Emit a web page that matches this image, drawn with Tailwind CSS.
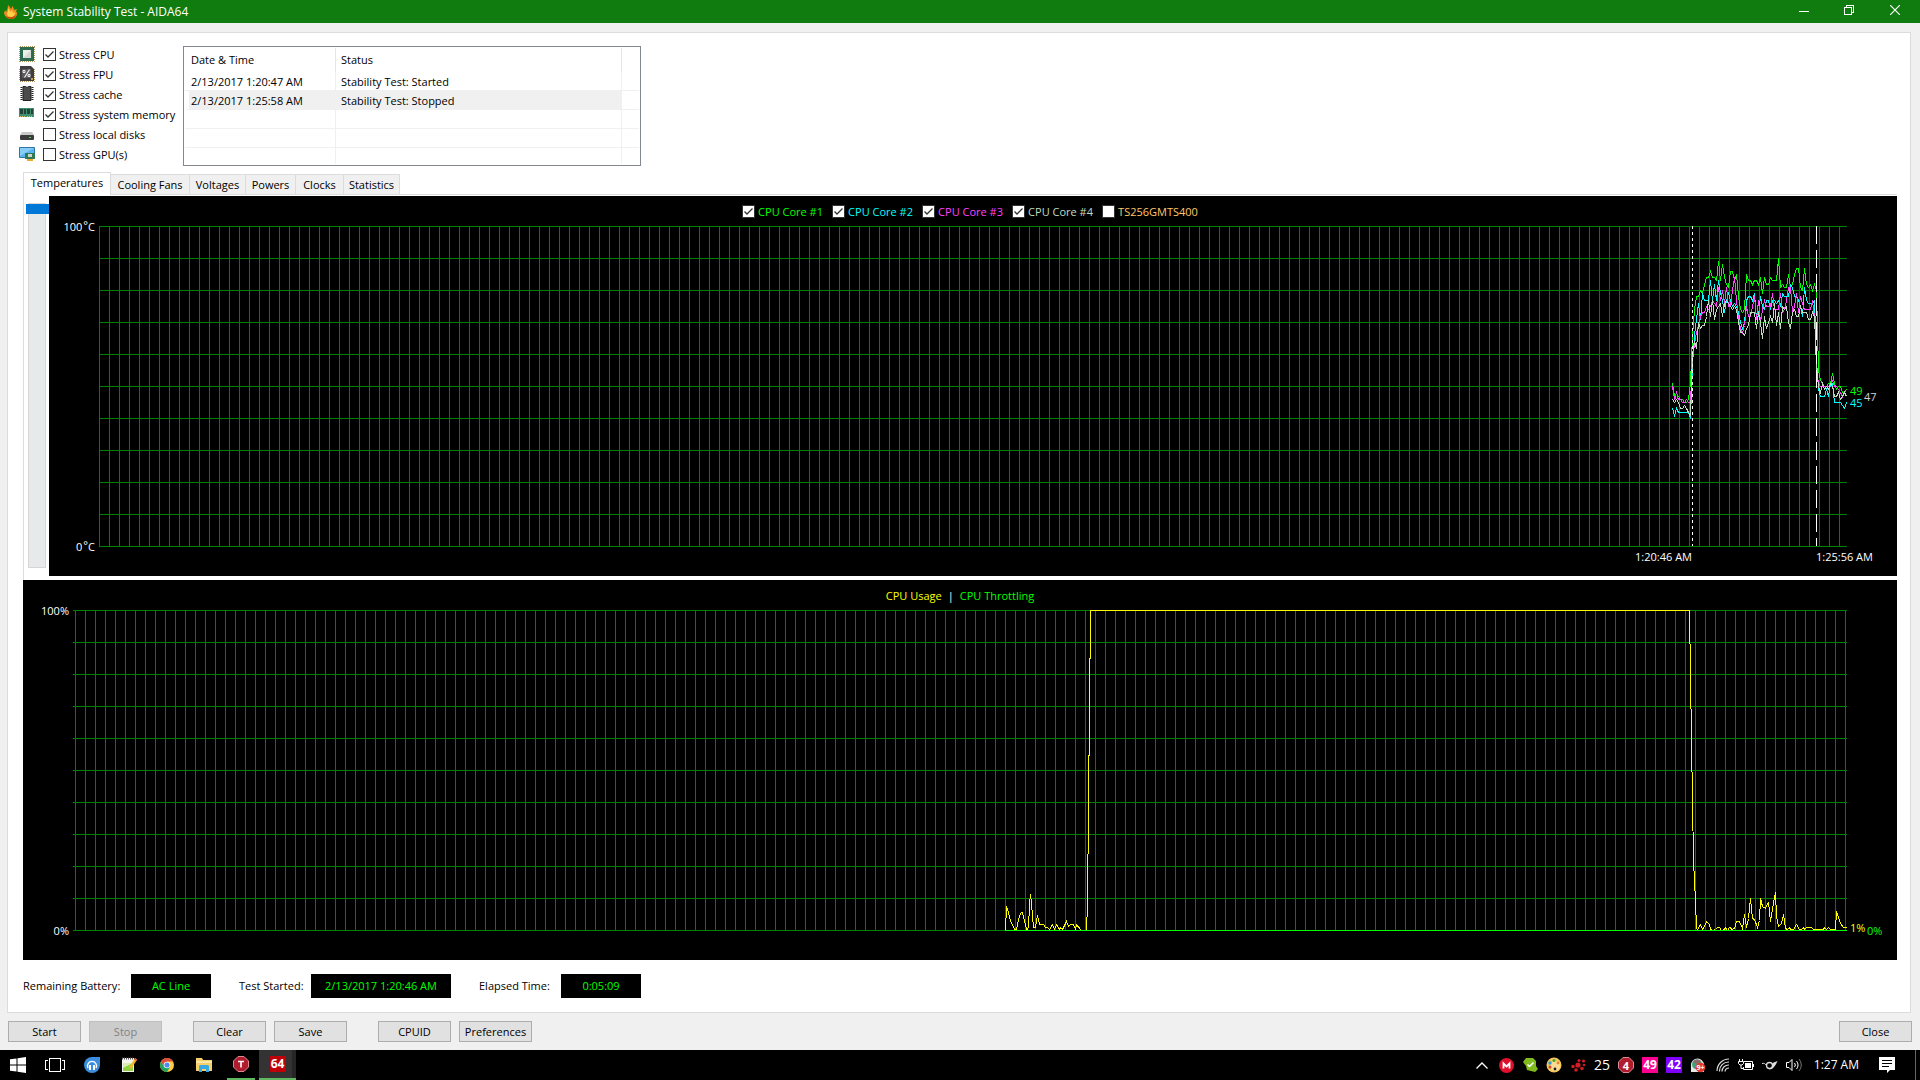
<!DOCTYPE html>
<html lang="en">
<head>
  <meta charset="UTF-8" />
  <meta name="viewport" content="width=device-width, initial-scale=1.0"/>
  <title>System Stability Test - AIDA64</title>
  <script src="https://cdn.jsdelivr.net/npm/@tailwindcss/browser@4"></script>
</head>
<body class="h-screen flex flex-col overflow-hidden bg-[#f0f0f0] text-black text-[11px] leading-4 font-['Open_Sans','Noto_Sans',sans-serif]">

  <!-- Title bar -->
  <header class="h-[23px] shrink-0 flex items-center bg-[#107c10] text-white pl-1 pr-0.5">
    <svg class="size-[14px] mr-[5px]" viewBox="0 0 14 14">
      <path d="M4 0c1 1 2 2 3 4 1-1 1-2 1-3 1 1 2 2 2 4l3-1-1 2 1 2c0 4-3 6-6 6S1 12 0 8l1-3 1 2c1-2 2-4 2-7z" fill="#f58a1f"/>
      <path d="M4 3c1 1 2 3 2 4l2-2 1 3 2-1c0 3-2 5-4 5S3 11 3 8l1-1z" fill="#ffd24a"/>
      <path d="M2 11c3 2 7 2 10-1-1 3-3 4-5 4s-4-1-5-3z" fill="#c2410c"/>
    </svg>
    <h1 class="flex-1 text-[12px]">System Stability Test - AIDA64</h1>
    <button class="w-[45px] h-full grid place-items-center pb-0.5" aria-label="Minimize">
      <svg width="10" height="10" viewBox="0 0 10 10" shape-rendering="crispEdges"><path d="M0 5.5h10" stroke="#fff"/></svg>
    </button>
    <button class="w-[46px] h-full grid place-items-center pb-1" aria-label="Restore">
      <svg width="10" height="10" viewBox="0 0 10 10" fill="none" stroke="#fff" shape-rendering="crispEdges"><path d="M.5 2.5h7v7h-7zM2.500 2V.5h7v7H8"/></svg>
    </button>
    <button class="w-[46px] h-full grid place-items-center pb-1" aria-label="Close window">
      <svg width="10" height="10" viewBox="0 0 10 10" stroke="#fff" stroke-width="1.2"><path d="M0 0l10 10M10 0L0 10"/></svg>
    </button>
  </header>

  <main class="flex-1 min-h-0 flex flex-col mt-[9px] ml-[7px] mr-[9px] bg-white border border-[#dcdcdc]">

    <!-- Stress options + event log -->
    <section class="flex pt-3 shrink-0">
      <ul class="w-[175px] shrink-0 pl-[11px]">
        <li class="h-5 flex items-center whitespace-nowrap">
          <svg class="size-4 mr-2 mb-0.5" viewBox="0 0 16 16"><path d="M1 .5h15M1 15.500h15M.5 1v15M15.500 1v15" stroke="#b5975a" stroke-dasharray="1 1"/><path d="M1 1h14v14H1z" fill="#2c6b4f"/><path d="M4 4h8v8H4z" fill="#d5d9d3"/><path d="M4 4h8l-8 8z" fill="#eceeea"/></svg>
          <label class="flex items-center gap-[3px] pb-px">
            <span class="grid size-[13px]"><input type="checkbox" checked class="peer col-start-1 row-start-1 size-[13px] appearance-none bg-white border border-[#333]"/><svg class="col-start-1 row-start-1 hidden peer-checked:block pointer-events-none" viewBox="0 0 13 13" fill="none" stroke="#333" stroke-width="1.3"><path d="M2.500 6.500l2.500 2.500 5.500-5.500"/></svg></span>
            Stress CPU
          </label>
        </li>
        <li class="h-5 flex items-center whitespace-nowrap">
          <svg class="size-4 mr-2 mb-0.5" viewBox="0 0 16 16"><path d="M1 15.500h15M15.500 3v12M.5 3v12" stroke="#b5975a" stroke-dasharray="1 1"/><path d="M1 0h11l3 3v12H1z" fill="#3f3d3f"/><path d="M3 3h9v9H3z" fill="#5c5a5c"/><path d="M10.500 3.500l-5 8" stroke="#eee" stroke-width="1.200"/><path d="M4 4.500h2v2H4zM9 8.500h2v2H9z" fill="none" stroke="#eee"/><path d="M12 12h2v2h-2z" fill="#c9a050"/></svg>
          <label class="flex items-center gap-[3px] pb-px">
            <span class="grid size-[13px]"><input type="checkbox" checked class="peer col-start-1 row-start-1 size-[13px] appearance-none bg-white border border-[#333]"/><svg class="col-start-1 row-start-1 hidden peer-checked:block pointer-events-none" viewBox="0 0 13 13" fill="none" stroke="#333" stroke-width="1.3"><path d="M2.500 6.500l2.500 2.500 5.500-5.500"/></svg></span>
            Stress FPU
          </label>
        </li>
        <li class="h-5 flex items-center whitespace-nowrap">
          <svg class="size-4 mr-2 mb-0.5" viewBox="0 0 16 16"><path d="M2.500 1v14M13.500 1v14" stroke="#222" stroke-width="2" stroke-dasharray="1 1"/><path d="M4 .5h2.500l1.500 1 1.500-1H12v14H4z" fill="#4b4b4b" stroke="#222"/></svg>
          <label class="flex items-center gap-[3px] pb-px">
            <span class="grid size-[13px]"><input type="checkbox" checked class="peer col-start-1 row-start-1 size-[13px] appearance-none bg-white border border-[#333]"/><svg class="col-start-1 row-start-1 hidden peer-checked:block pointer-events-none" viewBox="0 0 13 13" fill="none" stroke="#333" stroke-width="1.3"><path d="M2.500 6.500l2.500 2.500 5.500-5.500"/></svg></span>
            Stress cache
          </label>
        </li>
        <li class="h-5 flex items-center whitespace-nowrap">
          <svg class="size-4 mr-2 mb-0.5" viewBox="0 0 16 16"><path d="M0 2h15v9H0z" fill="#3f8f6c"/><path d="M1 3h3v5H1zM5 3h2v5H5zM8 3h3v5H8zM12 3h2v5h-2z" fill="#23423a"/><path d="M1 10.500h6M8 10.500h6" stroke="#d8b967" stroke-dasharray="1 1"/></svg>
          <label class="flex items-center gap-[3px] pb-px">
            <span class="grid size-[13px]"><input type="checkbox" checked class="peer col-start-1 row-start-1 size-[13px] appearance-none bg-white border border-[#333]"/><svg class="col-start-1 row-start-1 hidden peer-checked:block pointer-events-none" viewBox="0 0 13 13" fill="none" stroke="#333" stroke-width="1.3"><path d="M2.500 6.500l2.500 2.500 5.500-5.500"/></svg></span>
            Stress system memory
          </label>
        </li>
        <li class="h-5 flex items-center whitespace-nowrap">
          <svg class="size-4 mr-2 mb-0.5" viewBox="0 0 16 16"><path d="M3 6h10l2 3H1z" fill="#c9c9c9"/><rect x="1" y="9" width="14" height="5" rx="1" fill="#3c3c3c"/><path d="M10 11h2v1h-2z" fill="#4fd84f"/></svg>
          <label class="flex items-center gap-[3px] pb-px">
            <span class="grid size-[13px]"><input type="checkbox" class="peer col-start-1 row-start-1 size-[13px] appearance-none bg-white border border-[#333]"/><svg class="col-start-1 row-start-1 hidden peer-checked:block pointer-events-none" viewBox="0 0 13 13" fill="none" stroke="#333" stroke-width="1.3"><path d="M2.500 6.500l2.500 2.500 5.500-5.500"/></svg></span>
            Stress local disks
          </label>
        </li>
        <li class="h-5 flex items-center whitespace-nowrap">
          <svg class="size-4 mr-2 mb-0.5" viewBox="0 0 16 16"><path d="M.5 1.500h15v10H.5z" fill="#58b4ee" stroke="#2d74a8"/><path d="M1 2h14L1 10z" fill="#86cdf7"/><path d="M6 7h10v6H6z" fill="#2f7a55"/><path d="M9 8h4v3H9z" fill="#c9d6cd"/><path d="M8 13h6v2H8z" fill="#f0a92b"/></svg>
          <label class="flex items-center gap-[3px] pb-px">
            <span class="grid size-[13px]"><input type="checkbox" class="peer col-start-1 row-start-1 size-[13px] appearance-none bg-white border border-[#333]"/><svg class="col-start-1 row-start-1 hidden peer-checked:block pointer-events-none" viewBox="0 0 13 13" fill="none" stroke="#333" stroke-width="1.3"><path d="M2.500 6.500l2.500 2.500 5.500-5.500"/></svg></span>
            Stress GPU(s)
          </label>
        </li>
      </ul>

      <div class="w-[458px] mt-px border border-[#828790] p-px">
        <table class="w-full table-fixed border-separate border-spacing-0 text-left">
          <colgroup><col class="w-[151px]"/><col class="w-[286px]"/><col/></colgroup>
          <thead>
            <tr class="h-6">
              <th class="p-0 pl-[6px] font-normal border-r border-[#e5e5e5]">Date &amp; Time</th>
              <th class="p-0 pl-[5px] font-normal border-r border-[#e5e5e5]">Status</th>
              <th class="p-0"></th>
            </tr>
          </thead>
          <tbody>
            <tr class="h-[19px]">
              <td class="p-0 pt-0.5 pl-[6px] border-r border-b border-[#f0f0f0]">2/13/2017 1:20:47 AM</td>
              <td class="p-0 pt-0.5 pl-[5px] border-r border-b border-[#f0f0f0]">Stability Test: Started</td>
              <td class="p-0 border-b border-[#f0f0f0]"></td>
            </tr>
            <tr class="h-[19px]">
              <td class="p-0 pt-0.5 pl-[2px] bg-[#f0f0f0] border-l-4 border-l-white border-b border-b-[#f0f0f0]">2/13/2017 1:25:58 AM</td>
              <td class="p-0 pt-0.5 pl-[5px] bg-[#f0f0f0] border-b border-[#f0f0f0]">Stability Test: Stopped</td>
              <td class="p-0 border-b border-[#f0f0f0]"></td>
            </tr>
            <tr class="h-[19px]">
              <td class="p-0 border-r border-b border-[#f0f0f0]"></td><td class="p-0 border-r border-b border-[#f0f0f0]"></td><td class="p-0 border-b border-[#f0f0f0]"></td>
            </tr>
            <tr class="h-[19px]">
              <td class="p-0 border-r border-b border-[#f0f0f0]"></td><td class="p-0 border-r border-b border-[#f0f0f0]"></td><td class="p-0 border-b border-[#f0f0f0]"></td>
            </tr>
            <tr class="h-4">
              <td class="p-0 border-r border-[#f0f0f0]"></td><td class="p-0 border-r border-[#f0f0f0]"></td><td class="p-0"></td>
            </tr>
          </tbody>
        </table>
      </div>
    </section>

    <!-- Tabs -->
    <nav class="h-[22px] mt-[6px] ml-[15px] shrink-0 flex items-end" role="tablist">
      <button role="tab" aria-selected="true" class="relative z-10 w-[88px] h-[23px] -mb-px pb-0.5 bg-white border border-b-0 border-[#dcdcdc]">Temperatures</button>
      <button role="tab" class="w-[79px] h-5 bg-[#f0f0f0] border-t border-r border-[#dcdcdc] whitespace-nowrap">Cooling Fans</button>
      <button role="tab" class="w-[56px] h-5 bg-[#f0f0f0] border-t border-r border-[#dcdcdc]">Voltages</button>
      <button role="tab" class="w-[50px] h-5 bg-[#f0f0f0] border-t border-r border-[#dcdcdc]">Powers</button>
      <button role="tab" class="w-[48px] h-5 bg-[#f0f0f0] border-t border-r border-[#dcdcdc]">Clocks</button>
      <button role="tab" class="w-[56px] h-5 bg-[#f0f0f0] border-t border-r border-[#dcdcdc]">Statistics</button>
    </nav>

    <!-- Temperature graph -->
    <section class="grow basis-[386px] min-h-0 flex ml-[15px] mr-[13px] pt-px pb-1 border-t border-l border-[#dcdcdc]">
      <div class="w-[25px] shrink-0 flex pl-px pt-[7px] pb-2">
        <input id="zoomSlider" type="range" min="0" max="10" value="0" aria-label="Graph scale"
               class="w-[23px] h-full appearance-none bg-transparent [writing-mode:vertical-lr]
                      [&::-webkit-slider-runnable-track]:w-[18px] [&::-webkit-slider-runnable-track]:bg-[#e7eaea] [&::-webkit-slider-runnable-track]:border [&::-webkit-slider-runnable-track]:border-[#d6d6d6]
                      [&::-webkit-slider-thumb]:appearance-none [&::-webkit-slider-thumb]:w-[23px] [&::-webkit-slider-thumb]:h-[10px] [&::-webkit-slider-thumb]:-ml-[3px] [&::-webkit-slider-thumb]:bg-[#0078d7]"/>
      </div>
      <div class="flex-1 min-w-0 flex flex-col bg-black">
        <div id="legend" class="h-[30px] shrink-0 flex items-center justify-center pr-[6px] pt-px whitespace-nowrap">
          <label class="w-[90px] flex items-center gap-[3px] text-[#00ff00]">
            <span class="grid size-[13px]"><input type="checkbox" data-series="core1" checked class="peer col-start-1 row-start-1 size-[13px] appearance-none bg-white border border-[#333]"/><svg class="col-start-1 row-start-1 hidden peer-checked:block pointer-events-none" viewBox="0 0 13 13" fill="none" stroke="#333" stroke-width="1.3"><path d="M2.500 6.500l2.500 2.500 5.500-5.500"/></svg></span>
            CPU Core #1
          </label>
          <label class="w-[90px] flex items-center gap-[3px] text-[#00ffff]">
            <span class="grid size-[13px]"><input type="checkbox" data-series="core2" checked class="peer col-start-1 row-start-1 size-[13px] appearance-none bg-white border border-[#333]"/><svg class="col-start-1 row-start-1 hidden peer-checked:block pointer-events-none" viewBox="0 0 13 13" fill="none" stroke="#333" stroke-width="1.3"><path d="M2.500 6.500l2.500 2.500 5.500-5.500"/></svg></span>
            CPU Core #2
          </label>
          <label class="w-[90px] flex items-center gap-[3px] text-[#ff40ff]">
            <span class="grid size-[13px]"><input type="checkbox" data-series="core3" checked class="peer col-start-1 row-start-1 size-[13px] appearance-none bg-white border border-[#333]"/><svg class="col-start-1 row-start-1 hidden peer-checked:block pointer-events-none" viewBox="0 0 13 13" fill="none" stroke="#333" stroke-width="1.3"><path d="M2.500 6.500l2.500 2.500 5.500-5.500"/></svg></span>
            CPU Core #3
          </label>
          <label class="w-[90px] flex items-center gap-[3px] text-[#c0dcc0]">
            <span class="grid size-[13px]"><input type="checkbox" data-series="core4" checked class="peer col-start-1 row-start-1 size-[13px] appearance-none bg-white border border-[#333]"/><svg class="col-start-1 row-start-1 hidden peer-checked:block pointer-events-none" viewBox="0 0 13 13" fill="none" stroke="#333" stroke-width="1.3"><path d="M2.500 6.500l2.500 2.500 5.500-5.500"/></svg></span>
            CPU Core #4
          </label>
          <label class="flex items-center gap-[3px] text-[#ffc864]">
            <span class="grid size-[13px]"><input type="checkbox" class="peer col-start-1 row-start-1 size-[13px] appearance-none bg-white border border-[#333]"/><svg class="col-start-1 row-start-1 hidden peer-checked:block pointer-events-none" viewBox="0 0 13 13" fill="none" stroke="#333" stroke-width="1.3"><path d="M2.500 6.500l2.500 2.500 5.500-5.500"/></svg></span>
            TS256GMTS400
          </label>
        </div>
        <svg id="tempChart" class="w-full flex-1 min-h-0 overflow-visible text-[11px]"></svg>
      </div>
    </section>

    <!-- CPU usage graph -->
    <section class="grow basis-[380px] min-h-0 flex flex-col ml-[15px] mr-[13px] bg-black">
      <p class="h-[30px] shrink-0 flex items-center justify-center gap-[6px] pt-0.5">
        <span class="text-[#ffff00]">CPU Usage</span>
        <span class="text-white">|</span>
        <span class="text-[#00ff00]">CPU Throttling</span>
      </p>
      <svg id="usageChart" class="w-full flex-1 min-h-0 overflow-visible text-[11px]"></svg>
    </section>

    <!-- Status -->
    <section class="shrink-0 flex items-center gap-7 py-[14px] pl-[15px] whitespace-nowrap">
      <p class="flex items-center"><span class="w-[108px]">Remaining Battery:</span><output class="w-20 h-6 grid place-items-center bg-black text-[#00ff00]">AC Line</output></p>
      <p class="flex items-center"><span class="w-[72px]">Test Started:</span><output class="w-[140px] h-6 grid place-items-center bg-black text-[#00ff00]">2/13/2017 1:20:46 AM</output></p>
      <p class="flex items-center"><span class="w-[82px]">Elapsed Time:</span><output class="w-20 h-6 grid place-items-center bg-black text-[#00ff00]">0:05:09</output></p>
    </section>
  </main>

  <!-- Buttons -->
  <div class="shrink-0 flex gap-2 px-2 py-2">
    <button class="w-[73px] h-[21px] bg-[#e1e1e1] border border-[#adadad] leading-none">Start</button>
    <button disabled class="w-[73px] h-[21px] bg-[#cccccc] border border-[#bfbfbf] text-[#838383] leading-none">Stop</button>
    <button class="w-[73px] h-[21px] ml-[23px] bg-[#e1e1e1] border border-[#adadad] leading-none">Clear</button>
    <button class="w-[73px] h-[21px] bg-[#e1e1e1] border border-[#adadad] leading-none">Save</button>
    <button class="w-[73px] h-[21px] ml-[23px] bg-[#e1e1e1] border border-[#adadad] leading-none">CPUID</button>
    <button class="w-[73px] h-[21px] bg-[#e1e1e1] border border-[#adadad] leading-none">Preferences</button>
    <button class="w-[73px] h-[21px] ml-auto bg-[#e1e1e1] border border-[#adadad] leading-none">Close</button>
  </div>

  <!-- Taskbar -->
  <footer class="h-[30px] shrink-0 flex bg-black text-white">
    <button class="w-9 grid place-items-center" aria-label="Start menu">
      <svg width="16" height="16" viewBox="0 0 16 16" fill="#fff"><path d="M0 2.300L6.500 1.400V7.500H0zM7.500 1.200L16 0v7.500H7.500zM0 8.500h6.500v6.100L0 13.700zM7.500 8.500H16V16l-8.500-1.200z"/></svg>
    </button>
    <button class="w-[37px] grid place-items-center" aria-label="Task view">
      <svg width="20" height="14" viewBox="0 0 20 14" fill="none" stroke="#fff" shape-rendering="crispEdges"><path d="M4.500.5h11v13h-11zM3 2.500H.5v9H3M17 2.500h2.500v9H17"/></svg>
    </button>
    <button class="w-[38px] grid place-items-center" aria-label="Music">
      <svg width="16" height="16" viewBox="0 0 16 16"><path d="M8 0h8v8a8 8 0 1 1-8-8z" fill="#3b8ede"/><path d="M4 11a4.500 4.500 0 1 1 8 0" fill="none" stroke="#fff" stroke-width="1.300"/><path d="M5 8h2v5H5zM9 8h2v5H9z" fill="#fff"/></svg>
    </button>
    <button class="w-[37px] grid place-items-center" aria-label="Notepad++">
      <svg width="17" height="16" viewBox="0 0 17 16"><path d="M1 1h12v14H1z" fill="#f4f4ee"/><path d="M2 6h10v8H2z" fill="#8fd13f"/><path d="M2 6h10L2 11z" fill="#d6efae"/><path d="M1 1.500h12" stroke="#555" stroke-width="2" stroke-dasharray="1 1"/><path d="M15 2l-6 9" stroke="#f2b92c" stroke-width="2.500"/><path d="M14 1l2.500 1.500-1 1.500L13 2.500z" fill="#d9534f"/></svg>
    </button>
    <button class="w-[37px] grid place-items-center" aria-label="Chrome">
      <svg width="14" height="14" viewBox="0 0 14 14"><circle cx="7" cy="7" r="7" fill="#ffcd40"/><path d="M7 3.500h6.060A7 7 0 0 0 .94 3.500L4 9z" fill="#dd4b3e"/><path d="M.94 3.500A7 7 0 0 0 7 14l3-5H4z" fill="#1fa060"/><circle cx="7" cy="7" r="3.300" fill="#f1f1f1"/><circle cx="7" cy="7" r="2.500" fill="#4a8af4"/></svg>
    </button>
    <button class="w-[37px] grid place-items-center" aria-label="File Explorer">
      <svg width="16" height="14" viewBox="0 0 16 14"><path d="M0 0h6l1 2h9v11H0z" fill="#f6cf68"/><path d="M0 3h16v2H0z" fill="#fce7a8"/><path d="M3 14V8l1-1h8l1 1v6h-3v-3H6v3z" fill="#38a9e4"/></svg>
    </button>
    <button class="w-[37px] flex flex-col items-center" aria-label="ThrottleStop">
      <svg class="my-auto" width="16" height="16" viewBox="0 0 16 16"><path d="M5 .5h6L15.500 5v6L11 15.500H5L.5 11V5z" fill="#b01c2e" stroke="#d98a92"/><path d="M5 5.500h6M8 5v6.500" stroke="#fff" stroke-width="1.600"/></svg>
      <span class="w-7 h-[2px] bg-[#5fb85f]"></span>
    </button>
    <button class="relative w-[37px] flex flex-col items-center bg-gradient-to-r from-[#333] from-90% to-[#262626] to-90%" aria-label="AIDA64">
      <span class="size-4 my-auto grid place-items-center bg-[#c00008] text-[12px] leading-none font-bold">64</span>
      <span class="w-full h-[2px] bg-[#5fb85f]"></span>
    </button>

    <div class="ml-auto flex items-center">
      <button class="w-6 grid place-items-center" aria-label="Show hidden icons"><svg width="12" height="7" viewBox="0 0 12 7" fill="none" stroke="#fff" stroke-width="1.300"><path d="M.5 6.500L6 1l5.500 5.500"/></svg></button>
      <span class="w-6 grid place-items-center"><svg width="15" height="15" viewBox="0 0 15 15"><circle cx="7.500" cy="7.500" r="7.500" fill="#e0102c"/><path d="M4.500 10.500v-5l3 3 3-3v5" fill="none" stroke="#fff" stroke-width="1.800"/></svg></span>
      <span class="w-6 grid place-items-center"><svg width="15" height="14" viewBox="0 0 15 14"><path d="M3 0h7l3 3v5l2 3-3 3-4-1-4-1-1-4-3-4z" fill="#7fba1e"/><path d="M4.500 6.500l2 2 4-4" fill="none" stroke="#fff" stroke-width="1.500"/></svg></span>
      <span class="w-6 grid place-items-center"><svg width="16" height="16" viewBox="0 0 16 16"><circle cx="8" cy="8" r="7.500" fill="#f6c75c"/><circle cx="9" cy="9" r="5" fill="#fbdc93"/><circle cx="4" cy="6" r="1.700" fill="#2e9bd8"/><circle cx="8" cy="3.500" r="1.600" fill="#49ad3b"/><circle cx="4" cy="10" r="1.500" fill="#d8402e"/><circle cx="9" cy="12" r="1.400" fill="#222"/><circle cx="12" cy="6" r="1.400" fill="#e8842d"/></svg></span>
      <span class="w-6 grid place-items-center"><svg width="15" height="13" viewBox="0 0 15 13" fill="#d01c24"><circle cx="7" cy="6" r="2.600"/><circle cx="2" cy="7.500" r="1.800"/><circle cx="5" cy="11" r="1.800"/><circle cx="11" cy="9.500" r="1.800"/><circle cx="8" cy="1.600" r="1.500"/><circle cx="12.500" cy="2" r="1.600"/><circle cx="13" cy="6" r="1.300"/></svg></span>
      <span class="w-6 text-center text-[14px]">25</span>
      <span class="w-6 grid place-items-center"><span class="grid size-4 place-items-center"><svg class="col-start-1 row-start-1" width="16" height="16" viewBox="0 0 16 16"><path d="M5 .5h6L15.500 5v6L11 15.500H5L.5 11V5z" fill="#b01c2e" stroke="#d98a92"/></svg><span class="col-start-1 row-start-1 text-[11px] leading-none font-bold">4</span></span></span>
      <span class="w-6 grid place-items-center"><span class="size-4 grid place-items-center bg-[#ff0090] text-[12px] leading-none font-bold">49</span></span>
      <span class="w-6 grid place-items-center"><span class="size-4 grid place-items-center bg-[#8000ff] text-[12px] leading-none font-bold">42</span></span>
      <span class="w-6 grid place-items-center"><svg width="16" height="15" viewBox="0 0 16 15"><path d="M1 7a6.500 6.500 0 0 1 13 0v7H1z" fill="#e8e8e8"/><circle cx="7" cy="6.500" r="5" fill="#3fa37a"/><path d="M7 6.500L3 4a5 5 0 0 1 8-1z" fill="#8d6a6a"/><circle cx="10.500" cy="9.500" r="4.800" fill="#e03a32"/><text x="10.500" y="12" text-anchor="middle" font-size="7" font-weight="700" fill="#fff">9+</text></svg></span>
      <button class="w-6 grid place-items-center" aria-label="Network"><svg width="13" height="14" viewBox="0 0 13 14" fill="none" stroke="#ddd" stroke-width="1.200"><path d="M1 13A12 12 0 0 1 13 1M3.500 13.500A9 9 0 0 1 13 4M6 13.500a6.500 6.500 0 0 1 7-6.500M9 13.500a4 4 0 0 1 4-3.500"/></svg></button>
      <button class="w-6 grid place-items-center" aria-label="Power"><svg width="16" height="12" viewBox="0 0 16 12" fill="none" stroke="#fff"><path d="M6 2.500h8.500v8h-9V8M15.500 5v3"/><path d="M7 4h6v5H7z" fill="#fff" stroke="none"/><path d="M1.500 0v2M4.500 0v2M.5 2.500h5v2L4 6H2L.5 4.500zM3 6v3.500h2"/></svg></button>
      <span class="w-6 grid place-items-center"><svg width="16" height="12" viewBox="0 0 16 12" fill="none" stroke="#ddd"><circle cx="7.500" cy="6.500" r="3" stroke-width="1.300"/><path d="M0 4.500c2-.5 3 0 4 1.500"/><path d="M7 10.500c4 0 6-3 8.500-8.500-2 1-3 1-5 2 .5 3-.5 5-3.500 6.500z" fill="#ddd" stroke="none"/></svg></span>
      <button class="w-6 grid place-items-center" aria-label="Volume"><svg width="17" height="14" viewBox="0 0 17 14" fill="none" stroke="#fff"><path d="M.5 4.500H3l3-3v11l-3-3H.5z"/><path d="M8.500 5a3 3 0 0 1 0 4M10.500 3a6 6 0 0 1 0 8"/><path d="M13 1a9 9 0 0 1 0 12" stroke="#777"/></svg></button>
      <time class="w-[56px] text-right pr-[3px] text-[12px] whitespace-nowrap">1:27 AM</time>
      <button class="w-[50px] grid place-items-center" aria-label="Notifications"><svg width="16" height="16" viewBox="0 0 16 16"><path d="M0 0h16v13h-5l-3 3v-3H0z" fill="#fff"/><path d="M3 3.500h10M3 6.500h10M3 9.500h7" stroke="#000"/></svg></button>
      <button class="w-[5px] ml-[3px] h-[30px] border-l border-[#666]" aria-label="Show desktop"></button>
    </div>
  </footer>

  <script>
    // one sample every 2px, newest on the right
    const temps = {
      core1: { color: '#00ff00', data: [51,47,46,47,46,46,45,45,46,51,66,74,78,78,80,79,82,84,84,86,84,84,83,89,83,88,84,82,81,86,86,83,85,78,74,73,74,85,83,83,82,83,83,82,84,79,84,82,82,84,83,83,83,90,81,82,81,81,85,81,82,85,87,87,81,80,87,82,81,82,80,82,80,55,52,51,50,50,51,51,54,51,49,50,50,48,48,49] },
      core2: { color: '#00ffff', data: [43,41,43,42,42,42,42,42,42,40,57,66,71,76,71,79,77,77,77,83,77,82,77,83,79,77,73,77,79,77,75,76,75,73,70,68,70,77,78,78,77,79,71,72,78,75,74,77,77,74,77,77,76,77,75,79,78,78,78,82,81,78,78,77,75,72,81,77,76,76,76,77,58,49,47,47,47,49,47,51,51,45,45,45,45,44,43,45] },
      core3: { color: '#ff40ff', data: [50,46,48,46,46,45,45,46,45,45,59,63,67,69,72,73,73,75,74,75,77,76,75,81,77,80,76,81,75,75,80,84,77,71,68,67,69,75,72,72,75,78,71,77,70,74,77,75,75,75,79,74,74,74,79,73,74,77,81,81,73,75,79,73,78,76,74,74,74,74,77,72,56,51,50,50,50,50,50,51,52,50,50,49,48,47,48,47] },
      core4: { color: '#c0dcc0', data: [46,45,46,45,43,43,44,43,42,41,60,64,62,70,68,69,69,72,77,72,77,71,74,75,76,72,76,77,76,75,74,75,74,70,67,67,66,68,69,73,73,73,68,73,70,65,72,68,70,72,70,76,69,73,68,75,74,75,70,68,73,74,72,72,75,73,73,73,71,71,73,72,56,50,48,51,49,50,49,51,50,47,47,48,46,47,48,47] },
    };

    // [px left of the plot's right edge, units of 1/320 of the height]
    const usage = [
      [841,0],[840,24],[839,21],[836,10],[832,1],[830,1],[827,15],[825,18],[824,18],[820,1],[818,2],[817,27],[816,36],[815,27],[813,3],[811,3],[809,15],[807,6],[803,6],[801,3],[799,3],[797,1],[794,6],[792,1],[790,6],[787,1],[786,3],[784,1],[783,3],[780,9],[778,4],[776,6],[773,6],[771,1],[770,6],[766,1],[765,0],[760,0],[759,26],[756,320],
      [157,320],[155,190],[153,70],[151,30],[150,2],[149,1],[146,6],[144,1],[141,6],[140,9],[137,6],[136,1],[134,0],[131,1],[129,3],[127,3],[125,0],[122,1],[121,3],[119,0],[117,3],[116,3],[115,1],[112,2],[110,9],[107,9],[104,2],[102,16],[100,3],[98,12],[96,32],[94,12],[92,11],[89,3],[87,10],[86,32],[84,24],[81,22],[80,25],[78,28],[76,9],[74,22],[71,38],[70,14],[68,4],[65,7],[63,16],[61,2],[59,1],[57,3],[56,1],[53,1],[50,6],[47,1],[45,1],[43,3],[42,1],[40,3],[35,3],[33,1],[23,1],[22,3],[20,1],[18,3],[16,1],[11,1],[10,19],[8,13],[6,7],[3,3],[0,3],
    ];

    const text = (x, y, color, anchor, s) => `<text x="${x}" y="${y}" fill="${color}" text-anchor="${anchor}">${s}</text>`;

    function grid(left, start, right, height) {
      let d = '';
      for (let i = 0; i <= 10; i++) d += `M${start} ${Math.round(height * i / 10) + 0.5}H${right + 1}`;
      for (let x = left; x <= right; x += 10) d += `M${x + 0.5} 0V${height}`;
      return `<path d="${d}" stroke="#008000" shape-rendering="crispEdges"/>`;
    }

    function drawTemps() {
      const svg = document.getElementById('tempChart');
      const { width, height } = svg.getBoundingClientRect();
      const right = width - 51;
      const h = height - 30;
      let out = grid(50, 50, right, h);
      Object.keys(temps).filter(k => document.querySelector(`[data-series="${k}"]`).checked).forEach(k => {
        const pts = temps[k].data.map((v, i) => `${right - 174 + i * 2 + 0.5},${Math.round(h - v * h / 100) + 0.5}`).join(' ');
        out += `<polyline points="${pts}" fill="none" stroke="${temps[k].color}" shape-rendering="crispEdges"/>`;
      });
      out += `<path d="M${right - 153.5} 0V${h}" stroke="#fff" stroke-dasharray="3 3" shape-rendering="crispEdges"/>`;
      out += `<path d="M${right - 29.5} 0V${h}" stroke="#fff" stroke-dasharray="18 6" shape-rendering="crispEdges"/>`;
      out += text(46, 5, '#fff', 'end', '100<tspan dy="-2" dx="1">°</tspan><tspan dy="2">C</tspan>');
      out += text(46, h + 5, '#fff', 'end', '0<tspan dy="-2" dx="1">°</tspan><tspan dy="2">C</tspan>');
      out += text(right - 154, h + 15, '#fff', 'end', '1:20:46 AM');
      out += text(right - 30, h + 15, '#fff', 'start', '1:25:56 AM');
      out += text(right + 4, h - 151, '#00ff00', 'start', '49');
      out += text(right + 4, h - 139, '#00ffff', 'start', '45');
      out += text(right + 18, h - 145, '#d0d0d0', 'start', '47');
      svg.innerHTML = out;
    }

    function drawUsage() {
      const svg = document.getElementById('usageChart');
      const { width, height } = svg.getBoundingClientRect();
      const right = width - 51;
      const h = height - 30;
      let out = grid(52, 50, right, h);
      const pts = usage.map(([x, y]) => `${right - x + 0.5},${Math.round(h - y * h / 320) + 0.5}`).join(' ');
      out += `<polyline points="${pts}" fill="none" stroke="#ffff00" shape-rendering="crispEdges"/>`;
      out += `<path d="M${right - 841} ${h + 0.5}H${right + 1}" stroke="#00ff00" shape-rendering="crispEdges"/>`;
      out += text(46, 5, '#fff', 'end', '100%');
      out += text(46, h + 5, '#fff', 'end', '0%');
      out += text(right + 4, h + 2, '#ffff00', 'start', '1%');
      out += text(right + 21, h + 5, '#00ff00', 'start', '0%');
      svg.innerHTML = out;
    }

    document.getElementById('legend').addEventListener('change', drawTemps);
    new ResizeObserver(drawTemps).observe(document.getElementById('tempChart'));
    new ResizeObserver(drawUsage).observe(document.getElementById('usageChart'));
  </script>

</body>
</html>
